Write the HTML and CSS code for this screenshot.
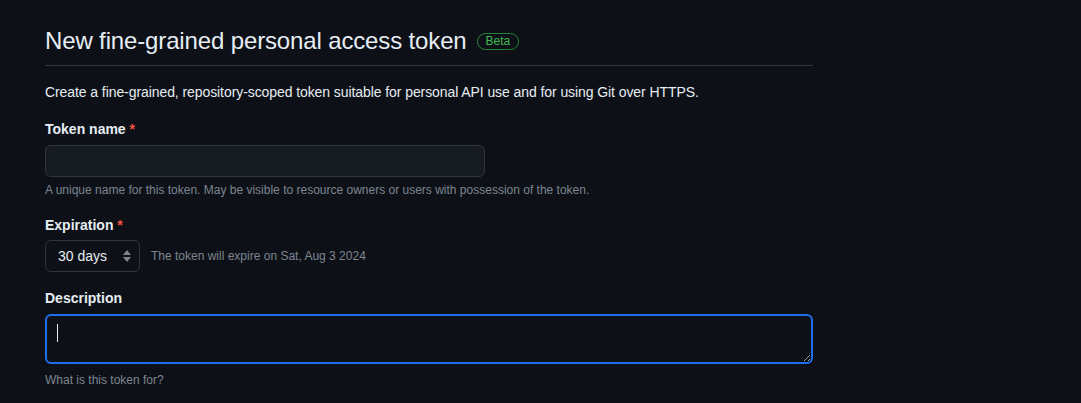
FILE: index.html
```html
<!DOCTYPE html>
<html lang="en">
<head>
<meta charset="utf-8">
<title>New fine-grained personal access token</title>
<link rel="stylesheet" href="styles.css">
</head>
<body>
<main class="page">
  <div class="subhead">
    <h1 class="subhead-title">New fine-grained personal access token <span class="label-beta">Beta</span></h1>
  </div>
  <p class="intro">Create a fine-grained, repository-scoped token suitable for personal API use and for using Git over HTTPS.</p>

  <div class="field">
    <label class="field-label" for="name">Token name <span class="req">*</span></label>
    <input class="input input-name" id="name" type="text">
    <p class="note">A unique name for this token. May be visible to resource owners or users with possession of the token.</p>
  </div>

  <div class="field">
    <label class="field-label exp-label" for="exp">Expiration <span class="req">*</span></label>
    <div class="exp-row">
      <div class="select-wrap">
        <select class="select" id="exp"><option>30 days</option></select>
        <svg class="select-arrows" width="10" height="16" viewBox="0 0 10 16" aria-hidden="true"><path d="M5 2 L9 7 H1 Z M5 14 L1 9 H9 Z" fill="#7d8590"/></svg>
      </div>
      <span class="exp-note">The token will expire on Sat, Aug 3 2024</span>
    </div>
  </div>

  <div class="field">
    <label class="field-label desc-label" for="desc">Description</label>
    <div class="textarea-wrap">
      <textarea class="textarea" id="desc"></textarea>
      <span class="caret"></span>
    </div>
    <p class="note">What is this token for?</p>
  </div>
</main>
</body>
</html>
```

FILE: styles.css
```css
html, body {
  margin: 0;
  background: #0d1117;
}
body {
  font-family: "Liberation Sans", Arial, sans-serif;
  color: #e6edf3;
  font-size: 14px;
}
.page {
  width: 768px;
  padding: 24px 0 0 45px;
}
.subhead {
  padding-bottom: 7px;
  border-bottom: 1px solid #30363d;
  margin-bottom: 16px;
}
.subhead-title {
  margin: 0;
  font-size: 24px;
  font-weight: 400;
  line-height: 34px;
  letter-spacing: -0.14px;
  display: flex;
  align-items: center;
}
.label-beta {
  display: inline-block;
  margin-left: 10px;
  padding: 0 8px;
  font-size: 12px;
  font-weight: 500;
  line-height: 15px;
  letter-spacing: 0;
  color: #3fb950;
  border: 1px solid #238636;
  border-radius: 2em;
}
.intro {
  margin: 0 0 16px;
  line-height: 21px;
  letter-spacing: -0.08px;
}
.field {
  margin-bottom: 16px;
}
.field-label {
  display: block;
  font-weight: 700;
  line-height: 21px;
  margin-bottom: 5px;
}
.exp-label {
  margin-bottom: 4px;
}
.req {
  color: #f85149;
}
.input {
  display: block;
  box-sizing: border-box;
  width: 440px;
  height: 32px;
  padding: 5px 12px;
  background: #161b22;
  border: 1px solid #30363d;
  border-radius: 6px;
  color: #e6edf3;
  font: inherit;
  outline: none;
}
.note {
  margin: 4px 0 0;
  font-size: 12px;
  line-height: 18px;
  color: #7d8590;
}
.exp-row {
  display: flex;
  align-items: center;
  gap: 11px;
}
.select-wrap {
  position: relative;
  width: 95px;
}
.select {
  appearance: none;
  -webkit-appearance: none;
  box-sizing: border-box;
  width: 95px;
  height: 32px;
  padding: 0 12px;
  background: #0d1117;
  border: 1px solid #30363d;
  border-radius: 6px;
  color: #e6edf3;
  font: inherit;
  outline: none;
}
.select-arrows {
  position: absolute;
  right: 8px;
  top: 8px;
  pointer-events: none;
}
.exp-note {
  font-size: 12px;
  color: #7d8590;
}
.textarea-wrap {
  position: relative;
}
.textarea {
  display: block;
  box-sizing: border-box;
  width: 768px;
  height: 50px;
  padding: 6px 12px;
  background: #0d1117;
  border: 2px solid #1f6feb;
  border-radius: 6px;
  color: #e6edf3;
  font: inherit;
  outline: none;
  resize: vertical;
}
.caret {
  position: absolute;
  left: 12px;
  top: 10px;
  width: 1px;
  height: 18px;
  background: #e6edf3;
}
.field:last-child .note {
  margin-top: 7px;
}
```
